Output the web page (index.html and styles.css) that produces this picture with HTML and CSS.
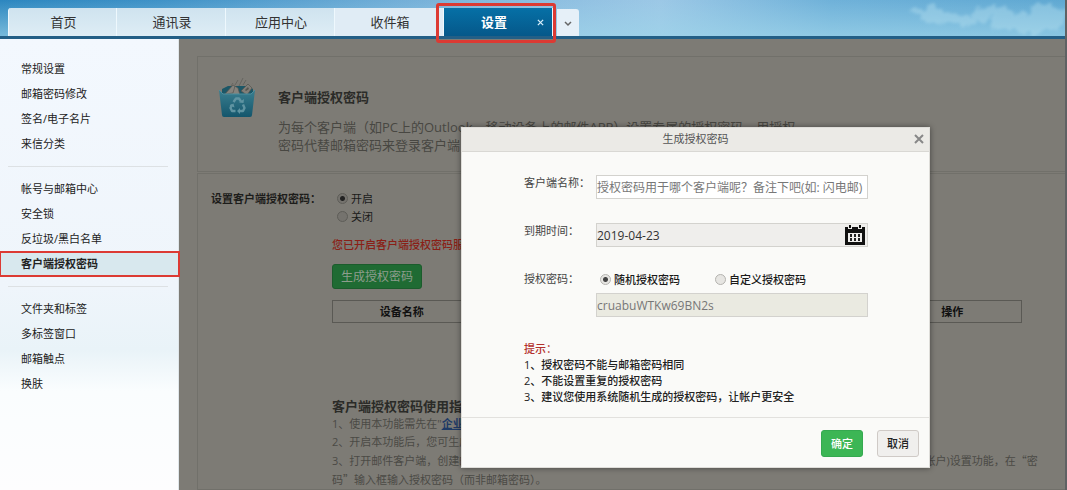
FILE: index.html
```html
<!DOCTYPE html>
<html lang="zh-CN">
<head>
<meta charset="utf-8">
<title>设置</title>
<link rel="stylesheet" href="styles.css">
</head>
<body>
<header class="topbar">
  <svg class="clouds" viewBox="0 0 200 36" aria-hidden="true">
    <defs><filter id="soft" x="-10%" y="-30%" width="120%" height="160%"><feTurbulence type="fractalNoise" baseFrequency=".09" numOctaves="4" seed="4"/><feDisplacementMap in="SourceGraphic" scale="16" xChannelSelector="R" yChannelSelector="G"/><feGaussianBlur stdDeviation="1.8"/></filter></defs>
    <g filter="url(#soft)" fill="#b9e2f0" opacity=".4">
      <ellipse cx="62" cy="13" rx="18" ry="4"/><ellipse cx="70" cy="10" rx="10" ry="4"/>
      <ellipse cx="90" cy="19" rx="36" ry="5"/><ellipse cx="128" cy="12" rx="19" ry="6"/>
      <ellipse cx="160" cy="23" rx="34" ry="10"/><ellipse cx="184" cy="15" rx="20" ry="9"/>
    </g>
  </svg>
  <nav class="tabs">
    <button class="tab">首页</button>
    <button class="tab">通讯录</button>
    <button class="tab">应用中心</button>
    <button class="tab">收件箱</button>
    <button class="tab tab-active">设置
      <svg class="tab-close" viewBox="0 0 8 8" aria-hidden="true"><path d="M1 1l6 6M7 1l-6 6"/></svg>
    </button>
    <button class="tab-more" aria-label="更多标签"><svg class="chevron" viewBox="0 0 8 6" aria-hidden="true"><path d="M1 1l3 3 3-3"/></svg></button>
  </nav>
</header>
<div class="layout">
  <aside class="sidebar">
    <div class="group">
      <a class="item" href="#">常规设置</a>
      <a class="item" href="#">邮箱密码修改</a>
      <a class="item" href="#">签名/电子名片</a>
      <a class="item" href="#">来信分类</a>
    </div>
    <div class="group">
      <a class="item" href="#">帐号与邮箱中心</a>
      <a class="item" href="#">安全锁</a>
      <a class="item" href="#">反垃圾/黑白名单</a>
      <a class="item item-active" href="#">客户端授权密码</a>
    </div>
    <div class="group">
      <a class="item" href="#">文件夹和标签</a>
      <a class="item" href="#">多标签窗口</a>
      <a class="item" href="#">邮箱触点</a>
      <a class="item" href="#">换肤</a>
    </div>
  </aside>
  <main class="main">
    <section class="card intro">
      <svg class="bin" viewBox="0 0 38 42" aria-hidden="true">
        <defs><linearGradient id="blue" x1="0" y1="0" x2="0" y2="1"><stop offset="0" stop-color="#3b7f90"/><stop offset="1" stop-color="#14566c"/></linearGradient></defs>
        <path d="M4 12l6-3h20l5 3v8H4z" fill="#1c5767"/>
        <path d="M17 8l3-5M21 9l4-8M25 8l3-5M13 9l2-3" stroke="#5f5f5a" stroke-width=".8"/>
        <path d="M7 17l8-9 5 3 2 7-12 2z" fill="#85837d" stroke="#55554f" stroke-width=".7"/>
        <path d="M8 17l7-1 2-7" fill="none" stroke="#55554f" stroke-width=".7"/>
        <path d="M23 14l7-7 4 4-5 7z" fill="#807e78" stroke="#55554f" stroke-width=".7"/>
        <path d="M27 13l3-3 1 2-3 2z" fill="#55554f"/>
        <path d="M1 13l4 4h28l4-4-3 25q0 2-2 2H6q-2 0-2-2z" fill="url(#blue)"/>
        <path d="M1 13l4 4h28l4-4" fill="none" stroke="#4d8e9e" stroke-width="1"/>
        <g fill="none" stroke="#5f94a2" stroke-width="2.4" stroke-linejoin="round">
          <path d="M15.500 25l2.500-3.500h3l2 3M25 27.500l1.500 3.500-1.500 3h-4M17.500 34h-3.500l-1.500-3 1.500-3.500"/>
        </g>
        <path d="M21 25.500l4.500.5.500-4zM22 31l-3 3 3 3zM11.500 28.500l4-2 1 4z" fill="#5f94a2"/>
      </svg>
      <div class="intro-text">
        <h1 class="title">客户端授权密码</h1>
        <p class="desc">为每个客户端（如PC上的Outlook、移动设备上的邮件APP）设置专属的授权密码，用授权<br>密码代替邮箱密码来登录客户端，更安全。</p>
      </div>
    </section>
    <section class="card setup">
      <div class="setup-label" id="switch-label">设置客户端授权密码：</div>
      <div class="setup-body">
        <div class="switch" role="radiogroup" aria-labelledby="switch-label">
          <label class="option option-dim"><input class="radio" type="radio" name="enabled" checked>开启</label>
          <label class="option option-dim"><input class="radio" type="radio" name="enabled">关闭</label>
        </div>
        <p class="notice">您已开启客户端授权密码服务</p>
        <button class="generate">生成授权密码</button>
        <table class="devices">
          <tr><th>设备名称</th><th></th><th></th><th></th><th>操作</th></tr>
        </table>
        <h2 class="title">客户端授权密码使用指南</h2>
        <ol class="guide">
          <li>1、使用本功能需先在"<a class="link" href="#">企业邮箱</a>"中开启</li>
          <li>2、开启本功能后，您可生成授权密码</li>
          <li>3、打开邮件客户端，创建邮箱帐户并在客户端的设置中填写收发信服务器地址和端口号帐号信息，或进入已有帐户的(邮箱帐户)设置功能，在<span class="wide">“</span>密码<span class="wide">”</span>输入框输入授权密码（而非邮箱密码）。</li>
        </ol>
      </div>
    </section>
  </main>
</div>
<form class="dialog" role="dialog" aria-labelledby="dialog-title">
  <div class="dialog-head">
    <span id="dialog-title">生成授权密码</span>
    <button class="dialog-close" type="button" aria-label="关闭"><svg class="cross" viewBox="0 0 10 10" aria-hidden="true"><path d="M1 1l8 8M9 1l-8 8"/></svg></button>
  </div>
  <div class="dialog-body">
    <div class="row">
      <label class="row-label" for="client">客户端名称：</label>
      <input class="field" id="client" type="text" placeholder="授权密码用于哪个客户端呢？备注下吧(如: 闪电邮)">
    </div>
    <div class="row">
      <label class="row-label" for="expiry">到期时间：</label>
      <div class="date">
        <input class="field field-date" id="expiry" type="text" value="2019-04-23">
        <svg class="calendar" viewBox="0 0 20 20" aria-hidden="true">
          <path fill="#111" d="M0 2h3v2h4V2h6v2h4V2h3v18H0z"/>
          <path fill="#111" d="M4 0h2v3H4zM14 0h2v3h-2z"/>
          <path fill="#efeeec" d="M3 8h14v9H3z"/>
          <path fill="#222" d="M5 9h2v3H5zM9 9h2v3H9zM13 9h2v3h-2zM5 13h2v3H5zM9 13h2v3H9zM13 13h2v3h-2z"/>
        </svg>
      </div>
    </div>
    <div class="row">
      <label class="row-label" for="code">授权密码：</label>
      <div class="code">
        <div class="kinds">
          <label class="option"><input class="radio" type="radio" name="kind" checked>随机授权密码</label>
          <label class="option"><input class="radio" type="radio" name="kind">自定义授权密码</label>
        </div>
        <input class="field field-code" id="code" type="text" value="cruabuWTKw69BN2s" readonly>
      </div>
    </div>
    <div class="tips">
      <strong class="tips-title">提示：</strong>
      <p>1、授权密码不能与邮箱密码相同</p>
      <p>2、不能设置重复的授权密码</p>
      <p>3、建议您使用系统随机生成的授权密码，让帐户更安全</p>
    </div>
  </div>
  <div class="dialog-foot">
    <button class="btn btn-ok" type="button">确定</button>
    <button class="btn" type="button">取消</button>
  </div>
</form>
</body>
</html>
```
FILE: styles.css
```css
* { box-sizing: border-box; }

body {
  margin: 0;
  min-height: 100vh;
  display: flex;
  flex-direction: column;
  position: relative;
  overflow: hidden;
  border-right: 2px solid #5f6163;
  background: #7d7b75;
  color: #222;
  font: 11px/18px "Open Sans", "Noto Sans CJK SC", sans-serif;
}

h1, h2, p, ol { margin: 0; padding: 0; }
ol { list-style: none; }
button, input { font: inherit; color: inherit; margin: 0; }
button { padding: 0; border: 0; cursor: pointer; }

.topbar {
  position: relative;
  height: 39px;
  padding: 8px 8px 0;
  border-bottom: 3px solid #235f86;
  background:
    linear-gradient(to bottom, rgba(160, 210, 232, 0), rgba(160, 214, 234, .65)),
    linear-gradient(to right, #2c86bf, #3f92c7 15%, #84b8dd 45%, #9cc8e6 62%, #6fb1d9 78%, #5fa8d2);
}
.clouds { position: absolute; top: 0; right: 0; width: 200px; height: 36px; }

.tabs { display: flex; align-items: flex-end; height: 28px; position: relative; }
.tab {
  position: relative;
  width: 109px;
  height: 28px;
  padding-left: 2px;
  border-right: 1px solid #eef8fd;
  background: linear-gradient(#cfe3ef, #deedf5);
  color: #333;
  font-size: 13px;
}
.tab:first-child { border-radius: 3px 0 0; border-left: 1px solid #eef8fd; }
.tab:nth-child(4) { background: #e0ecf5; }
.tab-active {
  background: linear-gradient(#0670a6, #05588a);
  color: #fff;
  font-weight: bold;
  padding: 0 8px 0 0;
}
.tab-active::after {
  content: "";
  position: absolute;
  inset: -5px -4px -7px -8px;
  border: 3px solid #dc3a33;
  border-radius: 3px;
}
.tab-close { position: absolute; right: 8px; top: 11px; width: 7px; height: 7px; fill: none; stroke: #d8eefa; stroke-width: 1.5; }
.tab-more { width: 22px; height: 27px; margin-left: 4px; border-radius: 0 3px 0 0; background: #e6f0f8; }
.chevron { width: 8px; height: 6px; fill: none; stroke: #666; stroke-width: 1.5; }

.layout { flex: 1; display: flex; }

.sidebar {
  width: 179px;
  flex: none;
  padding-top: 17px;
  border-right: 1px solid #dfe6ea;
  background: linear-gradient(#f3f8fe, #eff5fb 55%, #e9f3f8 69%, #fafdfe 78%, #fdfdfe);
}
.group + .group { margin-top: 10px; padding-top: 10px; position: relative; }
.group + .group::before { content: ""; position: absolute; top: 0; left: 8px; right: 10px; border-top: 1px solid #dde1e4; }
.item {
  display: block;
  position: relative;
  padding-left: 21px;
  line-height: 25px;
  color: #222;
  text-decoration: none;
}
.item-active { background: #d8e8ee; font-weight: bold; }
.item-active::after { content: ""; position: absolute; inset: 0 -2px -1px -1px; border: 2px solid #dc3a33; }

.main { flex: 1; padding: 17px 0 0 18px; display: flex; flex-direction: column; gap: 1px; color: #1d1d1b; }
.card { border: 1px solid #71706a; border-right: 0; }
.intro { display: flex; gap: 22px; padding: 20px; height: 116px; }
.bin { width: 38px; height: 42px; }
.intro-text { padding-top: 11px; }
.title { font-size: 13px; line-height: 18px; font-weight: bold; color: #2b2b28; }
.desc { margin-top: 12px; font-size: 13px; line-height: 18px; color: #484742; white-space: nowrap; }

.setup { flex: 1; display: flex; padding: 16px 43px 0 13px; }
.setup-label { width: 121px; flex: none; font-weight: bold; }
.setup-body { flex: 1; }
.switch { display: flex; flex-direction: column; padding-left: 5px; }
.option { display: flex; align-items: center; gap: 3px; color: #1a1a1a; }
.radio {
  appearance: none;
  width: 11px;
  height: 11px;
  margin-bottom: 2px;
  border: 1px solid #b4b3af;
  border-radius: 50%;
  background: #e6e5e2;
}
.radio:checked { background: radial-gradient(circle, #444 0 2px, #e6e5e2 3px); }
.option-dim .radio { border-color: #5e5d58; background: #75736e; }
.option-dim .radio:checked { background: radial-gradient(circle, #222 0 2px, #75736e 3px); }
.notice { margin-top: 10px; color: #8a1f17; font-weight: 500; }
.generate {
  display: block;
  width: 90px;
  height: 25px;
  margin-top: 10px;
  border: 1px solid #1b5c2c;
  border-radius: 3px;
  background: #1f6b33;
  color: #8d9d8d;
  font-size: 12px;
}
.devices { width: 100%; margin: 11px 0 74px; border: 1px solid #5a5954; border-collapse: collapse; table-layout: fixed; }
.devices th { height: 22px; padding: 0; line-height: 18px; color: #111; }
.guide { margin-right: -20px; color: #4b4a45; }
.wide { font-family: "Noto Sans CJK SC", sans-serif; }
.link { color: #1f3a66; font-weight: bold; }

.dialog {
  position: absolute;
  top: 127px;
  right: 135px;
  width: 469px;
  border: 1px solid #deddd9;
  background: #fafaf8;
  box-shadow: 0 0 6px rgba(0, 0, 0, .45);
}
.dialog-head {
  position: relative;
  height: 24px;
  border-bottom: 1px solid #d9d8d4;
  background: #ebeae6;
  color: #555;
  line-height: 22px;
  text-align: center;
}
.dialog-close { position: absolute; right: 5px; top: 6px; width: 10px; height: 10px; background: none; display: flex; }
.cross { width: 10px; height: 10px; fill: none; stroke: #888; stroke-width: 2; }
.dialog-body { padding: 23px 61px 12px 62px; }
.row { display: flex; margin-bottom: 24px; color: #444; }
.row-label { width: 72px; flex: none; line-height: 16px; white-space: nowrap; }
.field {
  flex: 1;
  width: 100%;
  min-width: 0;
  height: 24px;
  padding: 0;
  border: 1px solid #d3d2ce;
  border-radius: 0;
  background: #fff;
  color: #333;
  font-size: 12px;
}
.field::placeholder { color: #777; opacity: 1; }
.date { flex: 1; position: relative; }
.field-date { display: block; background: #efeeec; }
.calendar { position: absolute; right: 3px; top: 2px; width: 20px; height: 20px; }
.code { flex: 1; }
.kinds { display: flex; gap: 35px; padding-left: 4px; margin-bottom: 4px; font-weight: 500; }
.field-code { display: block; background: #eaeae1; color: #777; }
.tips { color: #222; line-height: 16px; font-weight: 500; white-space: nowrap; }
.tips-title { display: block; color: #b3302c; font-weight: 500; }
.dialog-foot {
  display: flex;
  justify-content: flex-end;
  gap: 14px;
  padding: 12px 10px 10px;
  border-top: 1px solid #e2e1de;
}
.btn {
  width: 42px;
  height: 27px;
  border: 1px solid #cfcac6;
  border-radius: 3px;
  background: #f0efed;
  color: #222;
  font-weight: 500;
}
.btn-ok { border-color: #35a950; background: #3cb655; color: #fff; }
```
